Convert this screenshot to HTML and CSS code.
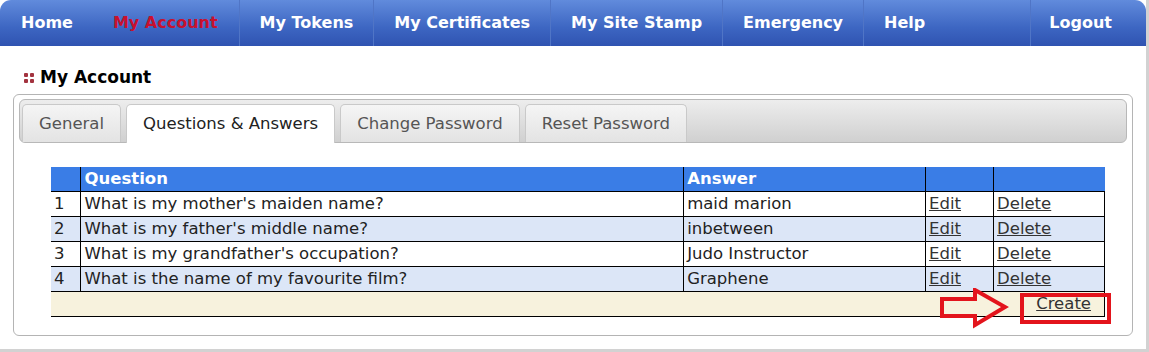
FILE: index.html
```html
<!DOCTYPE html>
<html>
<head>
<meta charset="utf-8">
<link rel="stylesheet" href="styles.css">
</head>
<body>
<div class="page">
  <nav class="nav">
    <a class="nav-item first">Home</a>
    <a class="nav-item active">My Account</a>
    <a class="nav-item sep">My Tokens</a>
    <a class="nav-item sep">My Certificates</a>
    <a class="nav-item sep">My Site Stamp</a>
    <a class="nav-item sep">Emergency</a>
    <a class="nav-item sep">Help</a>
    <a class="nav-item sep logout">Logout</a>
  </nav>
  <h1 class="title"><span class="title-icon"><i></i><i></i><i></i><i></i></span>My Account</h1>
  <div class="panel">
    <div class="tabbar">
      <div class="tab">General</div>
      <div class="tab current">Questions &amp; Answers</div>
      <div class="tab">Change Password</div>
      <div class="tab">Reset Password</div>
    </div>
    <table class="qa">
      <colgroup>
        <col class="c-num"><col class="c-q"><col class="c-a"><col class="c-edit"><col class="c-del">
      </colgroup>
      <thead>
        <tr><th></th><th>Question</th><th>Answer</th><th></th><th></th></tr>
      </thead>
      <tbody>
        <tr><td>1</td><td>What is my mother's maiden name?</td><td>maid marion</td><td><a>Edit</a></td><td><a>Delete</a></td></tr>
        <tr class="alt"><td>2</td><td>What is my father's middle name?</td><td>inbetween</td><td><a>Edit</a></td><td><a>Delete</a></td></tr>
        <tr><td>3</td><td>What is my grandfather's occupation?</td><td>Judo Instructor</td><td><a>Edit</a></td><td><a>Delete</a></td></tr>
        <tr class="alt"><td>4</td><td>What is the name of my favourite film?</td><td>Graphene</td><td><a>Edit</a></td><td><a>Delete</a></td></tr>
        <tr class="foot"><td colspan="5"><div class="foot-inner">
          <svg class="arrow" width="74" height="44" viewBox="0 0 74 44"><polygon points="4,11 37,11 37,2 67,19 37,37 37,28 4,28" fill="none" stroke="#e3141c" stroke-width="4" stroke-linejoin="miter"/></svg>
          <a class="create">Create</a><span class="highlight"></span>
        </div></td></tr>
      </tbody>
    </table>
  </div>
</div>
</body>
</html>
```
FILE: styles.css
```css
html, body {
  margin: 0;
  padding: 0;
}
body {
  background: #d2d2d2;
  font-family: "DejaVu Sans", Verdana, sans-serif;
}
.page {
  width: 1146px;
  height: 349px;
  background: #ffffff;
  overflow: hidden;
}
.nav {
  display: flex;
  height: 46px;
  background: linear-gradient(#618bdc, #3d66c2 60%, #2f53b1);
  border-radius: 11px 11px 0 0;
}
.nav-item {
  display: block;
  color: #ffffff;
  font-weight: bold;
  font-size: 16px;
  line-height: 45px;
  padding: 0 20px;
  white-space: nowrap;
}
.nav-item.first {
  padding-left: 21px;
}
.nav-item.active {
  color: #c8102e;
  padding-right: 21px;
}
.nav-item.sep {
  border-left: 1px solid #5075c6;
}
.nav-item.logout {
  margin-left: auto;
  padding: 0 34px 0 18px;
}
.title {
  margin: 0;
  padding: 21px 0 0 24px;
  font-size: 17px;
  line-height: 21px;
  font-weight: bold;
  color: #000000;
  display: flex;
  align-items: center;
}
.title-icon {
  display: grid;
  grid-template-columns: 4px 4px;
  grid-template-rows: 4px 4px;
  gap: 2px;
  margin-right: 6px;
}
.title-icon i {
  display: block;
  background: #a3333f;
  border-radius: 1px;
}
.panel {
  margin: 6px 0 0 13px;
  width: 1108px;
  height: 232px;
  border: 1px solid #b4b4b4;
  border-radius: 6px;
  padding: 4px 5px;
}
.tabbar {
  display: flex;
  gap: 5px;
  height: 38px;
  padding: 4px 2px 0 2px;
  border: 1px solid #b8b8b8;
  border-radius: 6px;
  background: linear-gradient(#ededed, #d0d0d0);
}
.tab {
  height: 38px;
  box-sizing: border-box;
  padding: 0 16px;
  font-size: 16.5px;
  line-height: 37px;
  color: #555555;
  border: 1px solid #c9c9c9;
  border-bottom: none;
  border-radius: 5px 5px 0 0;
  background: linear-gradient(#f5f5f5, #e3e3e3);
  white-space: nowrap;
}
.tab.current {
  background: #ffffff;
  color: #222222;
  height: 39px;
  position: relative;
  z-index: 1;
}
.qa {
  margin: 24px 0 0 32px;
  border-collapse: collapse;
  width: 1054px;
  font-size: 16.5px;
  color: #222222;
}
.c-num { width: 30px; }
.c-q { width: 603px; }
.c-a { width: 242px; }
.c-edit { width: 68px; }
.c-del { width: 111px; }
.qa th {
  background: #3a7de6;
  color: #ffffff;
  font-weight: bold;
  text-align: left;
  height: 24px;
  padding: 0 3px;
  line-height: 22px;
  border-left: 1px solid #000000;
}
.qa th:first-child {
  border-left: none;
}
.qa td {
  height: 24px;
  padding: 0 3px;
  line-height: 22px;
  border-top: 1px solid #000000;
  border-left: 1px solid #000000;
  white-space: nowrap;
}
.qa td:first-child {
  border-left: none;
}
.qa td:last-child {
  border-right: 1px solid #000000;
}
.qa tr.alt td {
  background: #dce6f7;
}
.qa a {
  color: #333333;
  text-decoration: underline;
}
.qa tr.foot td {
  background: #f7f2dd;
  border-bottom: 1px solid #000000;
  border-right: 1px solid #000000;
  text-align: right;
  padding: 0;
}
.foot-inner {
  position: relative;
  height: 24px;
  line-height: 24px;
  padding-right: 13px;
}
.highlight {
  position: absolute;
  right: -7px;
  top: 1px;
  width: 83px;
  height: 23px;
  border: 4px solid #e3141c;
}
.arrow {
  position: absolute;
  left: 887px;
  top: -4px;
}
```
